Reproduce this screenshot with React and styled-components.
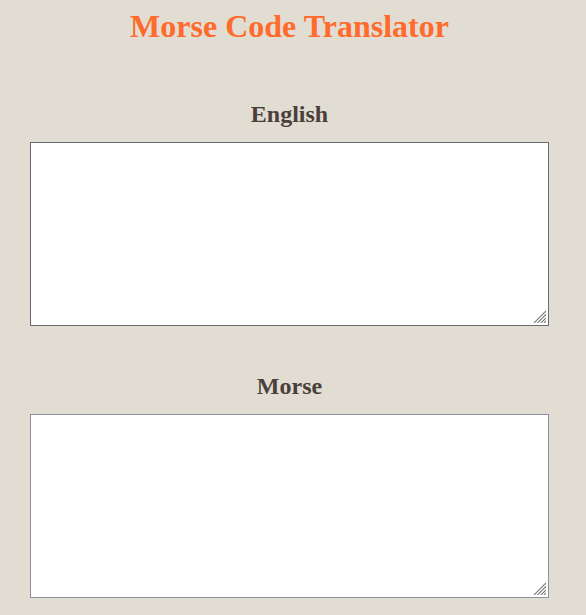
import React, { useState } from 'react'
import styled, { createGlobalStyle } from 'styled-components'

const GlobalStyle = createGlobalStyle`
  html, body {
    margin: 0;
    padding: 0;
    background-color: #e2ddd3;
  }
  body {
    font-family: "Liberation Serif", "Times New Roman", serif;
  }
`

const Page = styled.div`
  width: 579px;
  display: flex;
  flex-direction: column;
  align-items: center;
  padding-top: 8px;
`

const Title = styled.h1`
  margin: 0 0 54px;
  font-size: 32px;
  font-weight: bold;
  color: #ff6b2c;
  line-height: 36px;
`

const Section = styled.section`
  display: flex;
  flex-direction: column;
  align-items: center;
  & + & {
    margin-top: 44px;
  }
`

const Label = styled.label`
  font-size: 24px;
  font-weight: bold;
  color: #4a3f3b;
  line-height: 28px;
  margin: 2px 0 14px;
`

const Field = styled.div`
  position: relative;
  width: 519px;
  height: 184px;
`

const TextArea = styled.textarea`
  display: block;
  box-sizing: border-box;
  width: 100%;
  height: 100%;
  padding: 4px;
  border: 1px solid ${props => props.$dark ? '#6b6a72' : '#8f8f9d'};
  border-radius: 0;
  background: #fff;
  font-family: "Liberation Mono", monospace;
  font-size: 14px;
  outline: none;
  resize: none;
`

const Grip = styled.svg`
  position: absolute;
  right: 3px;
  bottom: 3px;
  width: 13px;
  height: 13px;
  pointer-events: none;
`

const ResizeGrip = () => (
  <Grip viewBox="0 0 13 13">
    <g stroke="#7d7d7d" strokeWidth="1.1">
      <line x1="1" y1="13" x2="13" y2="1" />
      <line x1="4.5" y1="13" x2="13" y2="4.5" />
      <line x1="8" y1="13" x2="13" y2="8" />
      <line x1="11" y1="13" x2="13" y2="11" />
    </g>
  </Grip>
)

export default function App() {
  const [english, setEnglish] = useState('')
  const [morse, setMorse] = useState('')
  return (
    <>
      <GlobalStyle />
      <Page>
        <Title>Morse Code Translator</Title>
        <Section>
          <Label htmlFor="english">English</Label>
          <Field>
            <TextArea id="english" $dark value={english} onChange={e => setEnglish(e.target.value)} />
            <ResizeGrip />
          </Field>
        </Section>
        <Section>
          <Label htmlFor="morse">Morse</Label>
          <Field>
            <TextArea id="morse" value={morse} onChange={e => setMorse(e.target.value)} />
            <ResizeGrip />
          </Field>
        </Section>
      </Page>
    </>
  )
}
